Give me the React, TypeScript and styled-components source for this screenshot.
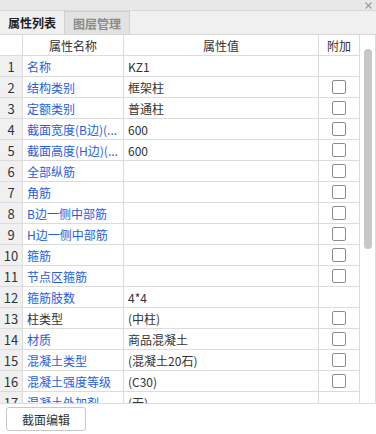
import React from "react";
import styled, { createGlobalStyle } from "styled-components";

const Global = createGlobalStyle`
  html, body { margin: 0; padding: 0; background: #ffffff; }
  body { font-family: "Noto Sans CJK SC", "Noto Sans", sans-serif; font-size: 12px; color: #333; }
  * { box-sizing: border-box; }
`;

const Panel = styled.div`
  width: 376px;
  height: 434px;
  display: flex;
  flex-direction: column;
  background: #fff;
  overflow: hidden;
`;

const TitleBar = styled.div`
  height: 11px;
  flex: none;
  background: #e8e8e8;
  border-bottom: 1px solid #d8d8d8;
  display: flex;
  align-items: center;
  justify-content: flex-end;
  padding-right: 4px;
`;

const TabStrip = styled.div`
  height: 24px;
  flex: none;
  background: #f0f0f0;
  border-bottom: 1px solid #d8d8d8;
  display: flex;
  align-items: stretch;
`;

const Tab = styled.div<{ $active?: boolean }>`
  width: 65px;
  display: flex;
  align-items: center;
  justify-content: center;
  font-weight: bold;
  font-size: 12px;
  color: ${(p) => (p.$active ? "#222" : "#8a8a8a")};
  background: ${(p) => (p.$active ? "#f0f0f0" : "#e2e2e2")};
  border-right: 1px solid #d0d0d0;
  border-top: ${(p) => (p.$active ? "none" : "1px solid #d0d0d0")};
`;

const Body = styled.div`
  height: 369px;
  flex: none;
  display: flex;
  border-bottom: 1px solid #dcdcdc;
`;

const Grid = styled.div`
  width: 360px;
  flex: none;
  overflow: hidden;
  display: grid;
  grid-template-columns: 23px 101px 195px 41px;
  grid-auto-rows: 21px;
  align-content: start;
`;

const Cell = styled.div<{ $kind: "num" | "name" | "value" | "extra" | "head" | "headnum"; $blue?: boolean }>`
  border-right: 1px solid #dcdcdc;
  border-bottom: 1px solid #dcdcdc;
  display: flex;
  align-items: center;
  overflow: hidden;
  white-space: nowrap;
  min-width: 0;
  background: ${(p) => (p.$kind === "num" ? "#f0f0f0" : "#fff")};
  justify-content: ${(p) =>
    p.$kind === "num" || p.$kind === "extra" || p.$kind === "head" || p.$kind === "headnum"
      ? "center"
      : "flex-start"};
  padding: ${(p) => (p.$kind === "name" || p.$kind === "value" ? "0 0 0 4px" : "0")};
  color: ${(p) => (p.$blue ? "#1f5ee0" : "#333")};
  font-size: ${(p) => (p.$kind === "num" ? "13px" : "12px")};
`;

const Clip = styled.span`
  overflow: hidden;
  white-space: nowrap;
  display: block;
  min-width: 0;
`;

const Check = styled.span`
  width: 14px;
  height: 14px;
  border: 1px solid #8c8c8c;
  border-radius: 2px;
  background: #fff;
  display: block;
`;

const ScrollTrack = styled.div`
  width: 16px;
  flex: none;
  border-right: 1px solid #dcdcdc;
  background: #fff;
  padding: 14px 0 0 4px;
`;

const Thumb = styled.div`
  width: 8px;
  height: 200px;
  border-radius: 4px;
  background: #c8c8c8;
`;

const Footer = styled.div`
  flex: 1;
  display: flex;
  align-items: flex-start;
  padding: 3px 0 0 6px;
`;

const Button = styled.button`
  width: 80px;
  height: 24px;
  background: #fff;
  border: 1px solid #c8c8c8;
  border-radius: 3px;
  font-family: "Noto Sans CJK SC", "Noto Sans", sans-serif;
  font-size: 12px;
  color: #333;
  padding: 0;
`;

type Row = { name: string; value: string; check: boolean; blue: boolean };

const rows: Row[] = [
  { name: "名称", value: "KZ1", check: false, blue: true },
  { name: "结构类别", value: "框架柱", check: true, blue: true },
  { name: "定额类别", value: "普通柱", check: true, blue: true },
  { name: "截面宽度(B边)(...", value: "600", check: true, blue: true },
  { name: "截面高度(H边)(...", value: "600", check: true, blue: true },
  { name: "全部纵筋", value: "", check: true, blue: true },
  { name: "角筋", value: "", check: true, blue: true },
  { name: "B边一侧中部筋", value: "", check: true, blue: true },
  { name: "H边一侧中部筋", value: "", check: true, blue: true },
  { name: "箍筋", value: "", check: true, blue: true },
  { name: "节点区箍筋", value: "", check: true, blue: true },
  { name: "箍筋肢数", value: "4*4", check: false, blue: true },
  { name: "柱类型", value: "(中柱)", check: true, blue: false },
  { name: "材质", value: "商品混凝土", check: true, blue: true },
  { name: "混凝土类型", value: "(混凝土20石)", check: true, blue: true },
  { name: "混凝土强度等级", value: "(C30)", check: true, blue: true },
  { name: "混凝土外加剂", value: "(无)", check: false, blue: true },
];

export default function App() {
  return (
    <Panel>
      <Global />
      <TitleBar>
        <svg width="7" height="7" viewBox="0 0 7 7">
          <path d="M0.5 0.5 L6.5 6.5 M6.5 0.5 L0.5 6.5" stroke="#9a9a9a" strokeWidth="1.1" />
        </svg>
      </TitleBar>
      <TabStrip>
        <Tab $active>属性列表</Tab>
        <Tab>图层管理</Tab>
      </TabStrip>
      <Body>
        <Grid>
          <Cell $kind="headnum" />
          <Cell $kind="head">属性名称</Cell>
          <Cell $kind="head">属性值</Cell>
          <Cell $kind="head">附加</Cell>
          {rows.map((r, i) => (
            <React.Fragment key={i}>
              <Cell $kind="num">{i + 1}</Cell>
              <Cell $kind="name" $blue={r.blue}>
                <Clip>{r.name}</Clip>
              </Cell>
              <Cell $kind="value">
                <Clip>{r.value}</Clip>
              </Cell>
              <Cell $kind="extra">{r.check && <Check />}</Cell>
            </React.Fragment>
          ))}
        </Grid>
        <ScrollTrack>
          <Thumb />
        </ScrollTrack>
      </Body>
      <Footer>
        <Button>截面编辑</Button>
      </Footer>
    </Panel>
  );
}
